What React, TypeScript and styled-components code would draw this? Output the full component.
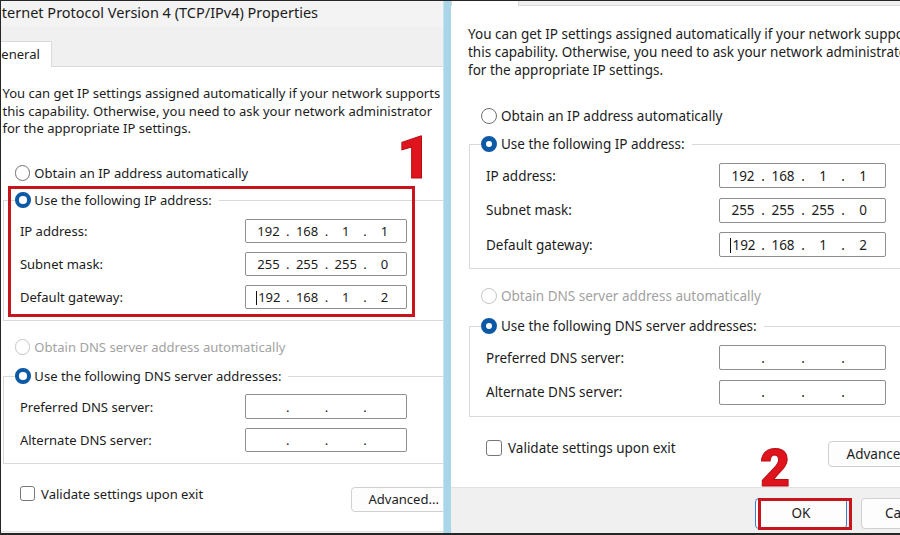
import React from 'react'
import styled, { createGlobalStyle } from 'styled-components'

const GlobalStyle = createGlobalStyle`
  html, body {
    margin: 0;
    padding: 0;
    background: #ffffff;
  }
  #root {
    width: 900px;
    height: 535px;
  }
`

type Row = { label: string; value: string[]; caret?: boolean }

const ipRows: Row[] = [
  { label: 'IP address:', value: ['192', '168', '1', '1'] },
  { label: 'Subnet mask:', value: ['255', '255', '255', '0'] },
  { label: 'Default gateway:', value: ['192', '168', '1', '2'], caret: true },
]

const dnsRows: Row[] = [
  { label: 'Preferred DNS server:', value: ['', '', '', ''] },
  { label: 'Alternate DNS server:', value: ['', '', '', ''] },
]

function IpField({ value, caret }: { value: string[]; caret?: boolean }) {
  return (
    <IpBox>
      {value.map((part, i) => (
        <React.Fragment key={i}>
          <Octet>
            {caret && i === 0 && <Caret />}
            {part}
          </Octet>
          {i < 3 && <Dot>.</Dot>}
        </React.Fragment>
      ))}
    </IpBox>
  )
}

function Rows({ rows }: { rows: Row[] }) {
  return (
    <RowList>
      {rows.map((r) => (
        <FieldRow key={r.label}>
          <span>{r.label}</span>
          <IpField value={r.value} caret={r.caret} />
        </FieldRow>
      ))}
    </RowList>
  )
}

function Dialog({ zoom, shiftX, shiftY }: { zoom: number; shiftX: number; shiftY: number }) {
  return (
    <DialogFrame $zoom={zoom} $shiftX={shiftX} $shiftY={shiftY}>
      <TitleBar>Internet Protocol Version 4 (TCP/IPv4) Properties</TitleBar>
      <TabStrip>
        <Tab>General</Tab>
        <TabFill />
      </TabStrip>
      <Content>
        <Intro>
          You can get IP settings assigned automatically if your network supports
          <br />
          this capability. Otherwise, you need to ask your network administrator
          <br />
          for the appropriate IP settings.
        </Intro>
        <RadioRow $indent={13} $gap={27}>
          <Radio />
          Obtain an IP address automatically
        </RadioRow>
        <Group $gap={8}>
          <Legend>
            <RadioRow $indent={0} $gap={0}>
              <Radio $checked />
              Use the following IP address:
            </RadioRow>
          </Legend>
          <Rows rows={ipRows} />
        </Group>
        <RadioRow $indent={13} $gap={17} $disabled>
          <Radio $disabled />
          Obtain DNS server address automatically
        </RadioRow>
        <Group $gap={10}>
          <Legend>
            <RadioRow $indent={0} $gap={0}>
              <Radio $checked />
              Use the following DNS server addresses:
            </RadioRow>
          </Legend>
          <Rows rows={dnsRows} />
        </Group>
        <Footer>
          <CheckRow>
            <CheckBox />
            Validate settings upon exit
          </CheckRow>
          <Button $width={110}>Advanced...</Button>
        </Footer>
      </Content>
      <ButtonBar>
        <Button $width={99} $primary>
          OK
        </Button>
        <Button $width={97}>Cancel</Button>
      </ButtonBar>
    </DialogFrame>
  )
}

export default function App() {
  return (
    <>
      <GlobalStyle />
      <Screen>
        <Panel $width={442}>
          <Dialog zoom={0.967} shiftX={-15.5} shiftY={-2} />
          <Marker $left={7} $top={185} $width={407} $height={131} />
          <StepNumber $left={396} $top={127} $size={60}>
            1
          </StepNumber>
        </Panel>
        <Divider />
        <Panel $width={450}>
          <Dialog zoom={1} shiftX={0} shiftY={-65} />
          <StepNumber $left={309} $top={442} $size={52}>
            2
          </StepNumber>
          <Marker $left={307} $top={497} $width={94} $height={32} />
        </Panel>
      </Screen>
    </>
  )
}

const Screen = styled.div`
  display: flex;
  width: 900px;
  height: 535px;
  box-sizing: border-box;
  border-top: 1px solid #262626;
  border-left: 1px solid #262626;
  border-bottom: 2px solid #262626;
  overflow: hidden;
  background: #ffffff;
`

const Panel = styled.div<{ $width: number }>`
  position: relative;
  flex: 0 0 ${(p) => p.$width}px;
  height: 100%;
  overflow: hidden;
`

const Divider = styled.div`
  flex: 0 0 7px;
  background: #a9d5e8;
  border-left: 1px solid #c4e2ef;
`

const DialogFrame = styled.div<{ $zoom: number; $shiftX: number; $shiftY: number }>`
  zoom: ${(p) => p.$zoom};
  width: 500px;
  margin-left: ${(p) => p.$shiftX}px;
  margin-top: ${(p) => p.$shiftY}px;
  display: flex;
  flex-direction: column;
  font-family: 'Noto Sans', 'Open Sans', sans-serif;
  font-size: 13.5px;
  color: #1c1c1c;
  background: #ffffff;
`

const TitleBar = styled.div`
  height: 29px;
  line-height: 27px;
  padding-left: 2px;
  font-size: 15px;
  background: #f3f3f3;
  white-space: nowrap;
`

const TabStrip = styled.div`
  display: flex;
  align-items: flex-end;
  height: 41px;
  background: #f0f0f0;
`

const Tab = styled.div`
  height: 27px;
  line-height: 26px;
  padding: 0 11px 0 5px;
  background: #ffffff;
  border: 1px solid #dadada;
  border-bottom: none;
  box-sizing: border-box;
`

const TabFill = styled.div`
  flex: 1;
  border-bottom: 1px solid #dadada;
`

const Content = styled.div`
  display: flex;
  flex-direction: column;
  padding: 19px 0 20px 17px;
  background: #ffffff;
`

const Intro = styled.p`
  margin: 0;
  line-height: 18px;
  white-space: nowrap;
`

const RadioRow = styled.div<{ $indent: number; $gap: number; $disabled?: boolean }>`
  display: flex;
  align-items: center;
  gap: 4px;
  height: 20px;
  margin: ${(p) => p.$gap}px 0 0 ${(p) => p.$indent}px;
  color: ${(p) => (p.$disabled ? '#a2a2a2' : 'inherit')};
  white-space: nowrap;
`

const Radio = styled.span<{ $checked?: boolean; $disabled?: boolean }>`
  flex: 0 0 16px;
  height: 16px;
  box-sizing: border-box;
  border-radius: 50%;
  background: #ffffff;
  border: ${(p) =>
    p.$checked ? '5px solid #0c5aa6' : p.$disabled ? '1px solid #c6c6c6' : '1px solid #707070'};
`

const Group = styled.fieldset<{ $gap: number }>`
  margin: ${(p) => p.$gap}px 0 0 1px;
  padding: 9px 0 11px 0;
  width: 480px;
  border: 1px solid #d9d9d9;
  border-right: none;
  min-width: 0;
`

const Legend = styled.legend`
  margin-left: 11px;
  padding: 0 7px 0 0;
`

const RowList = styled.div`
  display: flex;
  flex-direction: column;
  gap: 9.5px;
  padding-left: 16px;
`

const FieldRow = styled.div`
  display: grid;
  grid-template-columns: 233px 167px;
  align-items: center;
  height: 25px;
`

const IpBox = styled.div`
  display: flex;
  align-items: center;
  height: 25px;
  padding-left: 6px;
  box-sizing: border-box;
  border: 1px solid #8e8e8e;
  border-radius: 2px;
  background: #ffffff;
`

const Octet = styled.span`
  width: 34px;
  text-align: center;
`

const Dot = styled.span`
  width: 6px;
  text-align: center;
`

const Caret = styled.span`
  display: inline-block;
  width: 1px;
  height: 15px;
  margin-right: 1px;
  vertical-align: -3px;
  background: #111111;
`

const Footer = styled.div`
  display: grid;
  grid-template-columns: 360px 110px;
  align-items: start;
  margin-top: 21px;
`

const CheckRow = styled.div`
  display: flex;
  align-items: center;
  gap: 6px;
  height: 20px;
  padding-left: 18px;
  white-space: nowrap;
`

const CheckBox = styled.span`
  flex: 0 0 16px;
  height: 16px;
  box-sizing: border-box;
  border: 1px solid #767676;
  border-radius: 3px;
  background: #ffffff;
`

const Button = styled.div<{ $width: number; $primary?: boolean }>`
  width: ${(p) => p.$width}px;
  height: 26px;
  margin-top: 3px;
  display: flex;
  align-items: center;
  justify-content: center;
  box-sizing: border-box;
  border: 1px solid ${(p) => (p.$primary ? '#3d7cc9' : '#d0d0d0')};
  border-radius: 4px;
  background: #fdfdfd;
  white-space: nowrap;
`

const ButtonBar = styled.div`
  display: flex;
  gap: 14px;
  height: 60px;
  padding: 7px 0 0 304px;
  background: #f0f0f0;
  border-top: 1px solid #e2e2e2;
  & > div {
    height: 31px;
  }
`

const Marker = styled.div<{ $left: number; $top: number; $width: number; $height: number }>`
  position: absolute;
  left: ${(p) => p.$left}px;
  top: ${(p) => p.$top}px;
  width: ${(p) => p.$width}px;
  height: ${(p) => p.$height}px;
  box-sizing: border-box;
  border: 3px solid #c8141c;
`

const StepNumber = styled.div<{ $left: number; $top: number; $size: number }>`
  position: absolute;
  left: ${(p) => p.$left}px;
  top: ${(p) => p.$top}px;
  font-family: Roboto, 'Liberation Sans', sans-serif;
  font-weight: 900;
  font-size: ${(p) => p.$size}px;
  line-height: 1;
  color: #e0141c;
  -webkit-text-stroke: 1px #b50f16;
`
